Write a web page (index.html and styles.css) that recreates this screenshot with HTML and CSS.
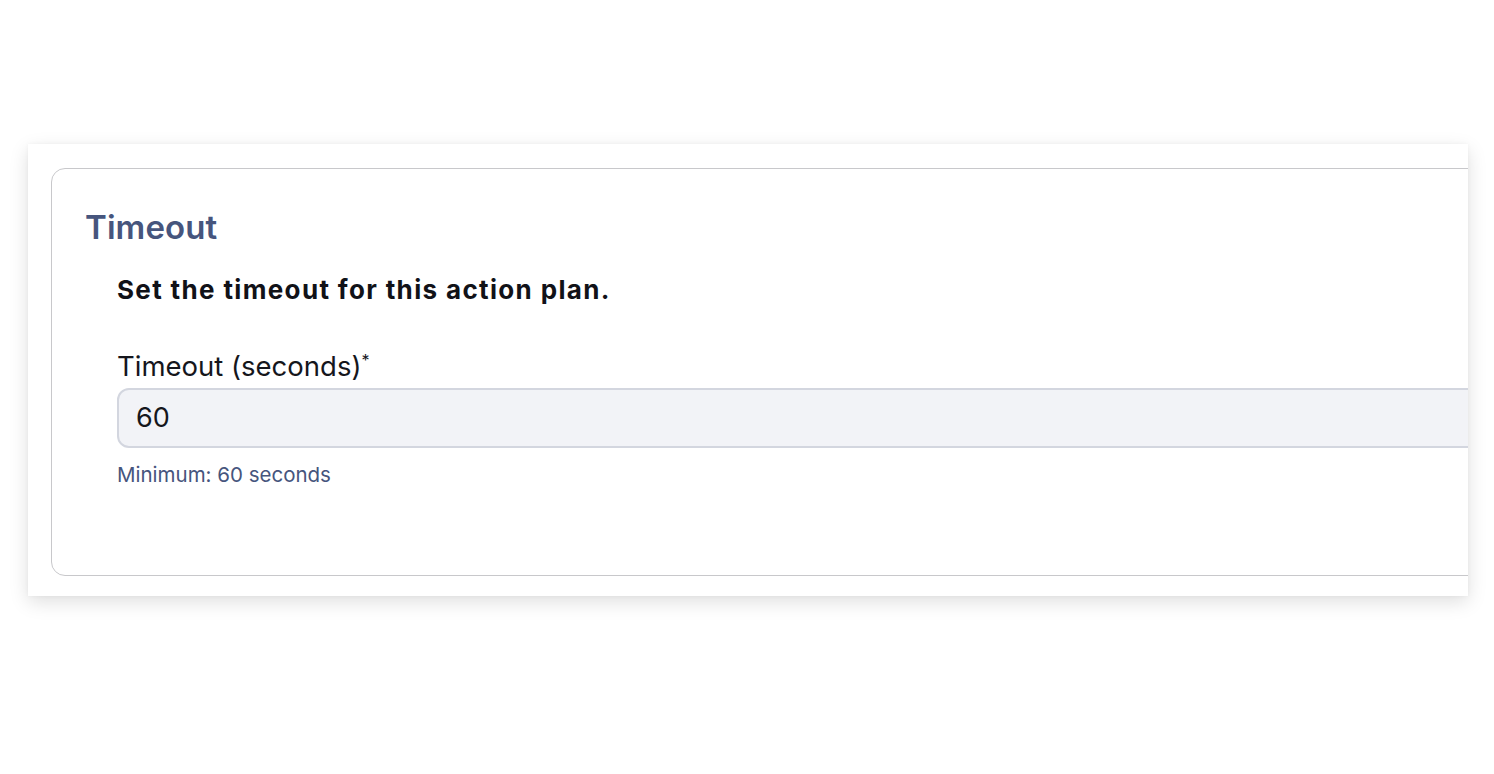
FILE: index.html
```html
<!DOCTYPE html>
<html>
<head>
<meta charset="utf-8">
<link rel="stylesheet" href="styles.css">
</head>
<body>
<div class="page">
  <div class="card">
    <section class="panel">
      <h2 class="panel-title">Timeout</h2>
      <div class="panel-body">
        <p class="lead">Set the timeout for this action plan.</p>
        <div class="field">
          <label class="field-label">Timeout (seconds)<sup class="req">*</sup></label>
          <div class="input">60</div>
          <div class="hint">Minimum: 60 seconds</div>
        </div>
      </div>
    </section>
  </div>
</div>
</body>
</html>
```
FILE: styles.css
```css
html, body {
  margin: 0;
  padding: 0;
  background: #ffffff;
}
body {
  font-family: Inter, "Noto Sans", sans-serif;
  width: 1494px;
  height: 774px;
  overflow: hidden;
}
.page {
  padding-top: 144px;
  padding-left: 28px;
}
.card {
  width: 1440px;
  height: 452px;
  box-sizing: border-box;
  background: #fff;
  box-shadow: 0 6px 18px rgba(0, 0, 0, 0.13), 0 0 4px rgba(0, 0, 0, 0.04);
  overflow: hidden;
  padding: 24px 0 0 23px;
}
.panel {
  width: 1500px;
  height: 408px;
  box-sizing: border-box;
  border: 1.5px solid #c8c8cb;
  border-radius: 14px;
  padding: 36px 0 0 33px;
}
.panel-title {
  margin: 0;
  font-size: 33px;
  line-height: 44px;
  font-weight: 600;
  color: #46557d;
  letter-spacing: 0.1px;
}
.panel-body {
  padding-left: 32px;
}
.lead {
  margin: 23px 0 0;
  font-size: 26px;
  line-height: 36px;
  font-weight: 700;
  color: #111218;
  letter-spacing: 1.35px;
}
.field {
  margin-top: 40px;
}
.field-label {
  display: block;
  font-size: 27.5px;
  line-height: 36px;
  color: #15161c;
}
.req {
  font-size: 16px;
  vertical-align: top;
  position: relative;
  top: -6px;
}
.input {
  margin-top: 4px;
  height: 60px;
  box-sizing: border-box;
  background: #f2f3f7;
  border: 2px solid #d3d6df;
  border-radius: 12px;
  padding-left: 17px;
  font-size: 27px;
  line-height: 56px;
  color: #15161c;
}
.hint {
  margin-top: 13px;
  font-size: 20.5px;
  line-height: 28px;
  color: #46557d;
}
```
